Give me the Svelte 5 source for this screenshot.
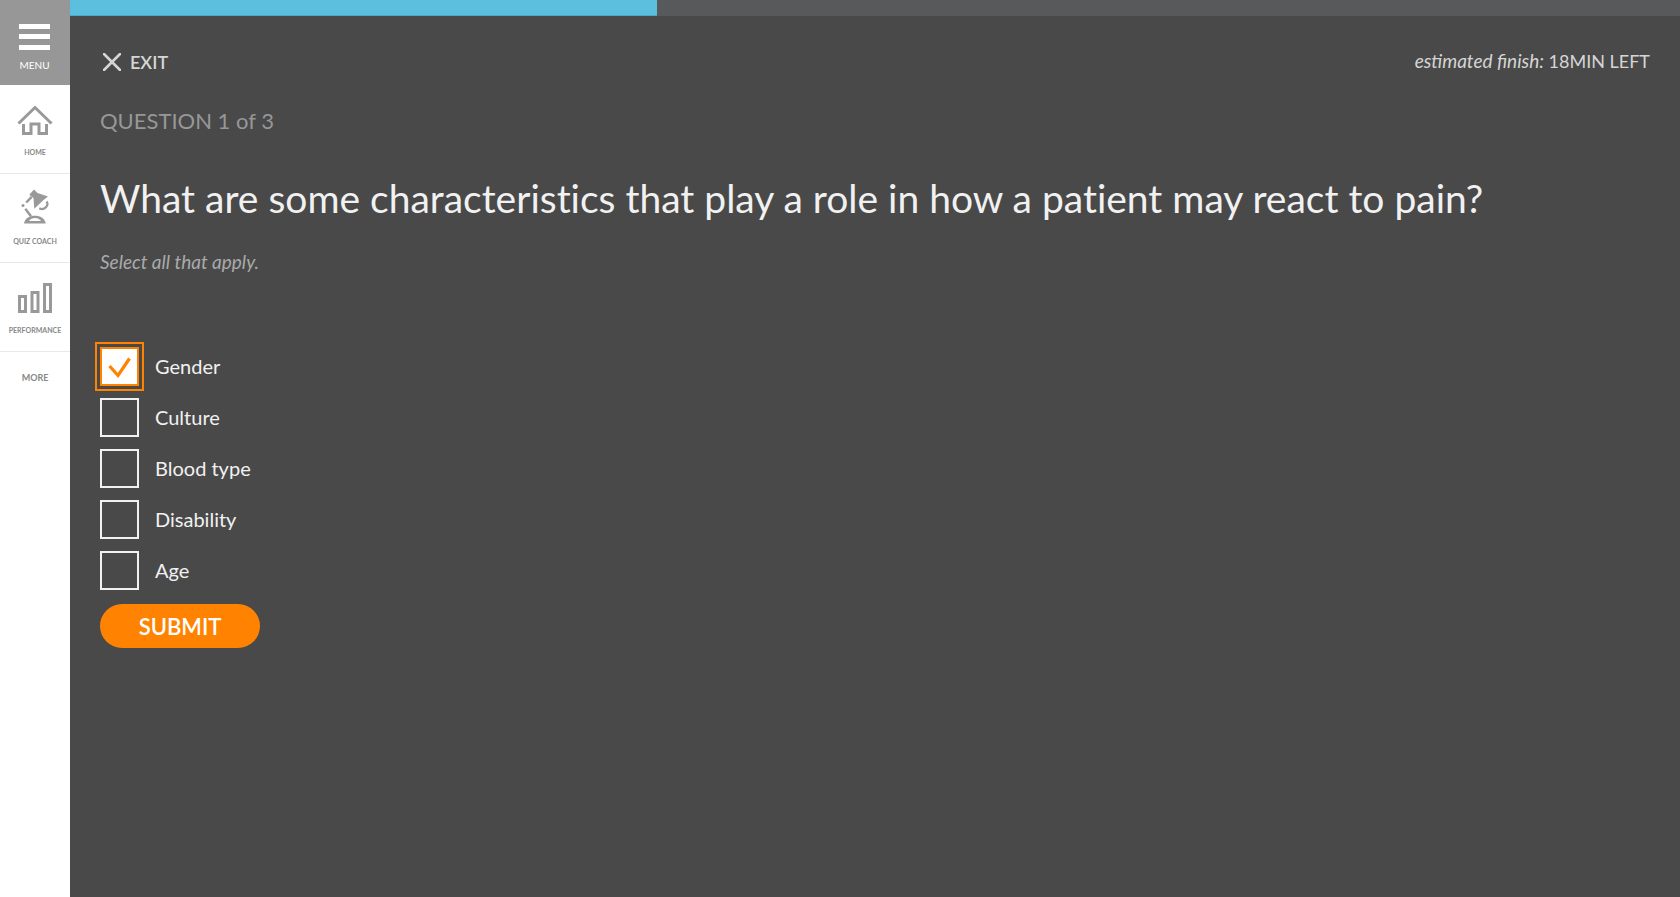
<script>
  const total = 3;
  const current = 1;
  const progress = 36.46;
  let options = $state([
    { id: 'gender', label: 'Gender', checked: true },
    { id: 'culture', label: 'Culture', checked: false },
    { id: 'blood-type', label: 'Blood type', checked: false },
    { id: 'disability', label: 'Disability', checked: false },
    { id: 'age', label: 'Age', checked: false }
  ]);
</script>

<div class="app">
  <nav class="sidebar">
    <button class="menu" type="button">
      <svg width="31" height="26" viewBox="0 0 31 26" aria-hidden="true">
        <path d="M0 0h31v5H0zM0 10h31v5H0zM0 21h31v5H0z" fill="#fff" />
      </svg>
      <span>MENU</span>
    </button>
    <a class="item" href="#home">
      <svg width="36" height="32" viewBox="0 0 36 32" fill="none" stroke="#999" aria-hidden="true">
        <path d="M1.500 19.500L18 3.500L34.500 19.500" stroke-width="3" />
        <path d="M6.500 20v9.500h7.500v-9.500h8v9.500h7.500v-9.500" stroke-width="3" />
      </svg>
      <span>HOME</span>
    </a>
    <a class="item" href="#quiz-coach">
      <svg width="36" height="36" viewBox="17 190.500 36 36" fill="none" stroke="#999" aria-hidden="true">
        <path d="M34 191L37.500 194.500L48 198L43.500 201.500L34.300 210.300L33.500 199.500L29.300 196.200z" fill="#999" stroke="none" />
        <path d="M31.700 198.300L26.200 204" stroke-width="2.400" />
        <circle cx="23" cy="207" r="1.500" fill="#999" stroke="none" />
        <path d="M25.300 210.300L31 217.700" stroke-width="2.400" />
        <path d="M46.500 203C49.500 207 44 212.500 39.300 209.800" stroke-width="2.200" />
        <path d="M24 225c1-10.500 20.700-10.500 21.700 0z" fill="#999" stroke="none" />
        <path d="M29 222.500c2.500-4 9.500-4 12 0z" fill="#fff" stroke="none" />
      </svg>
      <span>QUIZ COACH</span>
    </a>
    <a class="item" href="#performance">
      <svg width="36" height="32" viewBox="0 0 36 32" fill="none" stroke="#999" stroke-width="3" aria-hidden="true">
        <path d="M2.500 14.500h6v15h-6zM15 10.500h6v19h-6zM27.500 2.500h6v27h-6z" />
      </svg>
      <span>PERFORMANCE</span>
    </a>
    <button class="more" type="button">MORE</button>
  </nav>

  <div class="content">
    <div class="progress" role="progressbar" aria-label="Quiz progress" aria-valuenow={progress} aria-valuemin="0" aria-valuemax="100">
      <div class="bar" style="width: {progress}%"></div>
    </div>

    <main>
      <header>
        <button class="exit" type="button">
          <svg width="18" height="18" viewBox="0 0 18 18" aria-hidden="true">
            <path d="M1 1L17 17M17 1L1 17" stroke="#d5d5d5" stroke-width="2.600" stroke-linecap="round" />
          </svg>
          EXIT
        </button>
        <p class="estimate"><em>estimated finish:</em> 18MIN LEFT</p>
      </header>

      <p class="counter">QUESTION {current} of {total}</p>
      <h1>What are some characteristics that play a role in how a patient may react to pain?</h1>
      <p class="hint">Select all that apply.</p>

      <form onsubmit={(e) => e.preventDefault()}>
        <ul>
          {#each options as option, i (option.id)}
            <li class:focused={i === 0}>
              <input type="checkbox" id={option.id} bind:checked={option.checked} />
              <label for={option.id}>{option.label}</label>
            </li>
          {/each}
        </ul>
        <button class="submit" type="submit">SUBMIT</button>
      </form>
    </main>
  </div>
</div>

<style>
  :global(body) {
    background: #494949;
  }
  .app {
    display: flex;
    min-height: 100vh;
    font-family: Lato, "Open Sans", sans-serif;
    background: #494949;
    color: #f1f1f1;
  }
  button {
    font-family: inherit;
    border: 0;
    padding: 0;
    background: none;
    cursor: pointer;
  }
  p, h1, ul {
    margin: 0;
    padding: 0;
  }
  .sidebar {
    flex: 0 0 70px;
    display: flex;
    flex-direction: column;
    background: #fff;
  }
  .menu {
    display: flex;
    flex-direction: column;
    align-items: center;
    gap: 9px;
    height: 85px;
    padding: 24px 1px 0 0;
    box-sizing: border-box;
    background: #979797;
    color: #fff;
    font-size: 10px;
    line-height: 12px;
  }
  .item {
    display: flex;
    flex-direction: column;
    align-items: center;
    justify-content: flex-end;
    gap: 11px;
    height: 89px;
    padding-bottom: 16px;
    box-sizing: border-box;
    border-bottom: 1px solid #e8e8e8;
    color: #888;
    font-size: 7px;
    font-weight: 700;
    line-height: 10px;
    text-decoration: none;
    white-space: nowrap;
  }
  .more {
    height: 50px;
    color: #888;
    font-size: 9px;
    font-weight: 700;
  }
  .content {
    flex: 1;
    min-width: 0;
  }
  .progress {
    height: 16px;
    background: #58595b;
  }
  .bar {
    height: 100%;
    box-sizing: border-box;
    background: #5bc0de;
    border-bottom: 1px solid #4ba9c8;
  }
  main {
    padding: 34px 30px 40px;
  }
  header {
    display: flex;
    justify-content: space-between;
    align-items: flex-start;
    color: #d5d5d5;
  }
  .exit {
    display: flex;
    align-items: center;
    gap: 9px;
    padding-left: 3px;
    color: #d5d5d5;
    font-size: 18px;
    font-weight: 600;
    line-height: 24px;
  }
  .estimate {
    font-size: 18px;
    line-height: 22px;
  }
  .estimate em {
    font-size: 19px;
  }
  .counter {
    margin-top: 32px;
    color: #979797;
    font-size: 22px;
    line-height: 30px;
  }
  h1 {
    margin-top: 37px;
    font-size: 39px;
    font-weight: 400;
    line-height: 50px;
    font-variant-ligatures: none;
  }
  .hint {
    margin-top: 27px;
    color: #aaa;
    font-size: 19px;
    font-style: italic;
    line-height: 24px;
  }
  ul {
    display: grid;
    gap: 12px;
    margin-top: 73px;
    list-style: none;
  }
  li {
    display: flex;
    align-items: center;
    gap: 16px;
  }
  input {
    appearance: none;
    width: 39px;
    height: 39px;
    margin: 0;
    box-sizing: border-box;
    border: 2px solid #f1f1f1;
  }
  input:checked {
    border-color: #ff8300;
    background: #fff url("data:image/svg+xml,%3Csvg xmlns='http://www.w3.org/2000/svg' width='35' height='35'%3E%3Cpath d='M7.500 17l8.500 9.500L27.500 9.500' fill='none' stroke='%23ff8300' stroke-width='3.200'/%3E%3C/svg%3E") center no-repeat;
  }
  .focused input {
    outline: 2px solid #ff8300;
    outline-offset: 3px;
  }
  label {
    padding-bottom: 2px;
    font-size: 20px;
    line-height: 28px;
  }
  .submit {
    display: block;
    width: 160px;
    height: 44px;
    margin-top: 14px;
    border-radius: 22px;
    background: #ff8300;
    color: #fff;
    font-size: 22px;
    font-weight: 600;
  }
</style>
